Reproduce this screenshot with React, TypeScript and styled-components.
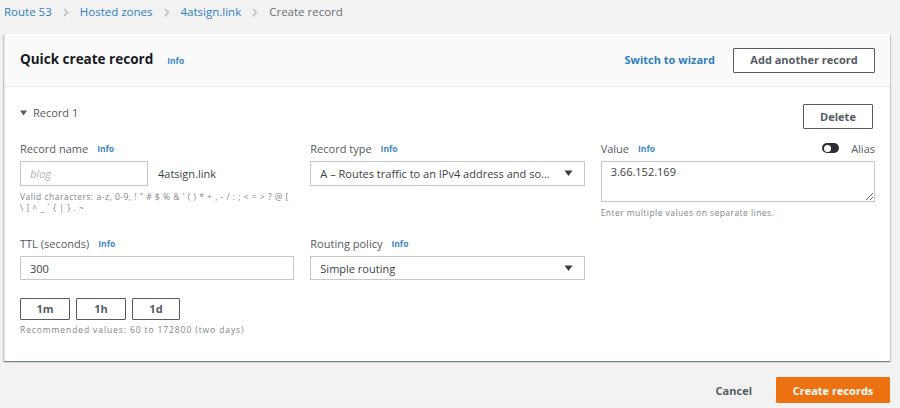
import React from "react";
import styled, { createGlobalStyle } from "styled-components";

const Global = createGlobalStyle`
  html, body { margin: 0; padding: 0; background: #f2f2f2; }
  body { font-family: "Open Sans", "Noto Sans", Arial, sans-serif; color: #16191f; }
  * { box-sizing: border-box; }
`;

const Page = styled.div`
  width: 900px;
  height: 408px;
  padding: 0 10px 0 4px;
  overflow: hidden;
`;

const Crumbs = styled.nav`
  height: 34px;
  display: flex;
  align-items: flex-start;
  padding-top: 4px;
  font-size: 11.5px;
  line-height: 16px;
`;

const Crumb = styled.span<{ $link?: boolean }>`
  color: ${(p) => (p.$link ? "#2f7fbf" : "#687078")};
`;

const Sep = styled.span`
  display: inline-flex;
  align-items: center;
  margin: 0 11px;
  color: #aab7b8;
  height: 16px;
`;

const Card = styled.section`
  background: #fff;
  box-shadow: 0 1px 1px 0 rgba(0, 28, 36, 0.35), 1px 1px 1px 0 rgba(0, 28, 36, 0.15),
    -1px 1px 1px 0 rgba(0, 28, 36, 0.15);
  border-left: 1px solid #e6e9e9;
`;

const CardHeader = styled.header`
  height: 53px;
  background: #fafafa;
  border-bottom: 1px solid #eaeded;
  display: flex;
  align-items: center;
  padding: 0 15px 0 15px;
`;

const Title = styled.h2`
  margin: 0 0 2px;
  font-size: 13.5px;
  font-weight: 700;
  color: #16191f;
`;

const Info = styled.span<{ $gap?: number }>`
  font-size: 8.5px;
  font-weight: 700;
  color: #3b86c3;
  margin-left: ${(p) => p.$gap ?? 7}px;
`;

const Spacer = styled.div`
  flex: 1;
`;

const LinkButton = styled.span`
  font-size: 11px;
  font-weight: 700;
  color: #2f7fbf;
  margin-right: 18px;
  margin-bottom: 2px;
`;

const OutlineButton = styled.button<{ $w?: number; $h?: number }>`
  width: ${(p) => p.$w ?? 70}px;
  height: ${(p) => p.$h ?? 25}px;
  border: 1px solid #545b64;
  background: #fff;
  font-family: inherit;
  font-size: 11px;
  font-weight: 700;
  color: #545b64;
  padding: 0 0 1px;
  border-radius: 1px;
`;

const CardBody = styled.div`
  padding: 17px 15px 26px 15px;
`;

const RecordHead = styled.div`
  height: 25px;
  display: flex;
  align-items: flex-start;
  justify-content: space-between;
  padding-right: 2px;
`;

const RecordTitle = styled.span`
  margin-top: 1px;
  font-size: 11px;
  line-height: 16px;
  color: #545b64;
  display: flex;
  align-items: center;
  gap: 6px;
`;

const Grid = styled.div`
  margin-top: 12px;
  display: grid;
  grid-template-columns: repeat(3, 1fr);
  column-gap: 16px;
  row-gap: 18px;
`;

const Field = styled.div``;

const LabelRow = styled.div`
  height: 14px;
  display: flex;
  align-items: center;
  margin-bottom: 6px;
`;

const Label = styled.span`
  font-size: 11px;
  color: #545b64;
`;

const InputBox = styled.div<{ $w?: string; $h?: number }>`
  width: ${(p) => p.$w ?? "100%"};
  height: ${(p) => p.$h ?? 25}px;
  border: 1px solid #c4c8c9;
  background: #fff;
  display: flex;
  align-items: center;
  padding: 0 9px;
  font-size: 11px;
  color: #3a3f45;
`;

const Placeholder = styled.span`
  font-style: italic;
  color: #aab7b8;
`;

const NameRow = styled.div`
  display: flex;
  align-items: center;
  gap: 10px;
`;

const Suffix = styled.span`
  font-size: 11px;
  color: #3a3f45;
`;

const SelectText = styled.span`
  flex: 1;
  white-space: nowrap;
  overflow: hidden;
`;

const Caret = styled.svg`
  margin-left: 8px;
  margin-right: 2px;
`;

const Help = styled.div<{ $mt?: number; $ls?: number }>`
  margin-top: ${(p) => p.$mt ?? 5}px;
  font-size: 8.5px;
  line-height: 11px;
  letter-spacing: ${(p) => p.$ls ?? 0.45}px;
  color: #7d858c;
  white-space: nowrap;
`;

const TextArea = styled.textarea`
  display: block;
  width: 100%;
  height: 41px;
  border: 1px solid #c4c8c9;
  font-family: inherit;
  font-size: 11px;
  color: #3a3f45;
  padding: 2px 9px;
  resize: vertical;
  outline: none;
  margin: 0;
`;

const AliasWrap = styled.div`
  margin-left: auto;
  display: flex;
  align-items: center;
  gap: 12px;
`;

const Toggle = styled.span`
  width: 17px;
  height: 10px;
  border-radius: 5px;
  background: #2b2f33;
  position: relative;
  &::after {
    content: "";
    position: absolute;
    left: 1.5px;
    top: 1.5px;
    width: 7px;
    height: 7px;
    border-radius: 50%;
    background: #fff;
  }
`;

const ChipRow = styled.div`
  margin-top: 18px;
  display: flex;
  gap: 6px;
`;

const Footer = styled.footer`
  margin-top: 16px;
  display: flex;
  justify-content: flex-end;
  align-items: center;
  gap: 24px;
`;

const Cancel = styled.span`
  font-size: 11px;
  font-weight: 700;
  color: #545b64;
`;

const Primary = styled.button`
  width: 114px;
  height: 26px;
  border: 1px solid #ec7211;
  background: #ec7211;
  color: #fff;
  font-family: inherit;
  font-size: 11px;
  font-weight: 700;
  border-radius: 1px;
  padding: 0;
`;

const Chevron = () => (
  <svg width="6" height="9" viewBox="0 0 6 9">
    <path d="M1 1l3.5 3.5L1 8" fill="none" stroke="#aab7b8" strokeWidth="1.2" />
  </svg>
);

const Down = () => (
  <Caret width="9" height="7" viewBox="0 0 9 7">
    <path d="M0.5 0.5h8L4.5 6z" fill="#3a3f45" />
  </Caret>
);

export default function App() {
  return (
    <>
      <Global />
      <Page>
        <Crumbs>
          <Crumb $link>Route 53</Crumb>
          <Sep><Chevron /></Sep>
          <Crumb $link>Hosted zones</Crumb>
          <Sep><Chevron /></Sep>
          <Crumb $link>4atsign.link</Crumb>
          <Sep><Chevron /></Sep>
          <Crumb>Create record</Crumb>
        </Crumbs>
        <Card>
          <CardHeader>
            <Title>Quick create record</Title>
            <Info $gap={14}>Info</Info>
            <Spacer />
            <LinkButton>Switch to wizard</LinkButton>
            <OutlineButton $w={142}>Add another record</OutlineButton>
          </CardHeader>
          <CardBody>
            <RecordHead>
              <RecordTitle>
                <svg width="7" height="6" viewBox="0 0 7 6">
                  <path d="M0 0.5h7L3.5 5.5z" fill="#545b64" />
                </svg>
                Record 1
              </RecordTitle>
              <OutlineButton $w={70}>Delete</OutlineButton>
            </RecordHead>
            <Grid>
              <Field>
                <LabelRow>
                  <Label>Record name</Label>
                  <Info $gap={9}>Info</Info>
                </LabelRow>
                <NameRow>
                  <InputBox $w="128px">
                    <Placeholder>blog</Placeholder>
                  </InputBox>
                  <Suffix>4atsign.link</Suffix>
                </NameRow>
                <Help $ls={0.5}>
                  Valid characters: a-z, 0-9, ! " # $ % &amp; ' ( ) * + , - / : ; &lt; = &gt; ? @ [
                  <br />
                  \ ] ^ _ ` {"{"} | {"}"} . ~
                </Help>
              </Field>
              <Field>
                <LabelRow>
                  <Label>Record type</Label>
                  <Info $gap={9}>Info</Info>
                </LabelRow>
                <InputBox>
                  <SelectText>A – Routes traffic to an IPv4 address and so...</SelectText>
                  <Down />
                </InputBox>
              </Field>
              <Field>
                <LabelRow>
                  <Label>Value</Label>
                  <Info $gap={9}>Info</Info>
                  <AliasWrap>
                    <Toggle />
                    <Label>Alias</Label>
                  </AliasWrap>
                </LabelRow>
                <TextArea readOnly value="3.66.152.169" />
                <Help $mt={5}>Enter multiple values on separate lines.</Help>
              </Field>
              <Field>
                <LabelRow>
                  <Label>TTL (seconds)</Label>
                  <Info $gap={9}>Info</Info>
                </LabelRow>
                <InputBox $h={24}>300</InputBox>
                <ChipRow>
                  <OutlineButton $w={50} $h={22}>1m</OutlineButton>
                  <OutlineButton $w={50} $h={22}>1h</OutlineButton>
                  <OutlineButton $w={48} $h={22}>1d</OutlineButton>
                </ChipRow>
                <Help $mt={4} $ls={0.9}>Recommended values: 60 to 172800 (two days)</Help>
              </Field>
              <Field>
                <LabelRow>
                  <Label>Routing policy</Label>
                  <Info $gap={9}>Info</Info>
                </LabelRow>
                <InputBox $h={24}>
                  <SelectText>Simple routing</SelectText>
                  <Down />
                </InputBox>
              </Field>
              <Field />
            </Grid>
          </CardBody>
        </Card>
        <Footer>
          <Cancel>Cancel</Cancel>
          <Primary>Create records</Primary>
        </Footer>
      </Page>
    </>
  );
}
